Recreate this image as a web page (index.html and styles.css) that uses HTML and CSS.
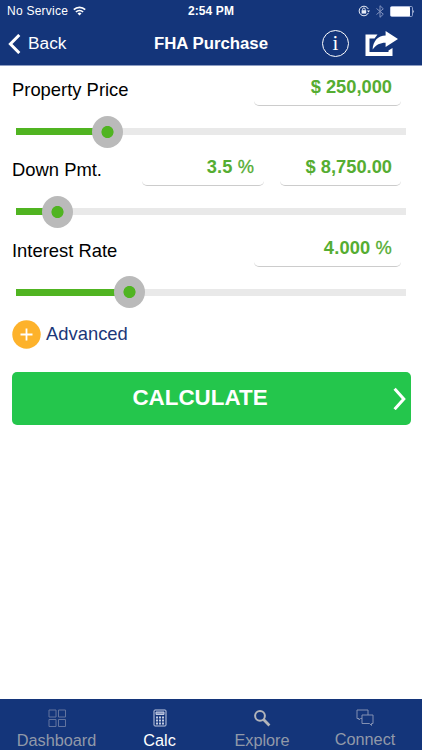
FILE: index.html
```html
<!DOCTYPE html>
<html lang="en">
<head>
  <meta charset="UTF-8">
  <meta name="viewport" content="width=device-width, initial-scale=1.0">
  <title>FHA Purchase</title>
  <link rel="stylesheet" href="styles.css">
</head>
<body>
  <header>
    <div class="status">
      <div class="carrier">
        <span>No Service</span>
        <svg width="13" height="10" viewBox="0 0 13 10" fill="none" stroke="#fff" stroke-width="1.7">
          <path d="M0.8 3.6a8.2 8.2 0 0 1 11.4 0M2.9 6a5.2 5.2 0 0 1 7.2 0"/>
          <path d="M6.5 9.5L4.5 7.5a2.9 2.9 0 0 1 4 0z" fill="#fff" stroke="none"/>
        </svg>
      </div>
      <div class="time">2:54 PM</div>
      <div class="indicators">
        <svg width="12" height="12" viewBox="0 0 12 12" fill="none" stroke="#e6ebf5">
          <path d="M10.3 4A4.8 4.8 0 1 0 10.3 8"/>
          <path d="M9 5.6h3l-1.5 2z" fill="#e6ebf5" stroke="none"/>
          <rect x="3.6" y="5.2" width="4.6" height="3.4" fill="#e6ebf5" stroke="none"/>
          <path d="M4.6 5.4V4.3a1.3 1.3 0 0 1 2.6 0v1.1"/>
        </svg>
        <svg class="bluetooth" width="8" height="13" viewBox="0 0 8 13" fill="none" stroke="#8394bf">
          <path d="M0.5 3.5l6.8 5.7L4 12.3V0.7l3.3 3.1L0.5 9.5"/>
        </svg>
        <svg width="25" height="11" viewBox="0 0 25 11">
          <rect x="0.5" y="0.5" width="22" height="10" rx="1.2" fill="none" stroke="#8fa0cb"/>
          <rect x="0.5" y="0.8" width="19.5" height="9.4" rx="0.8" fill="#fff"/>
          <path d="M23.4 3.8q1.4 1.7 0 3.4z" fill="#fff"/>
        </svg>
      </div>
    </div>
    <nav class="navbar">
      <a class="back">
        <svg width="13" height="20" viewBox="0 0 13 20" fill="none" stroke="#fff" stroke-width="3">
          <path d="M11.3 1L2.4 10l8.9 9"/>
        </svg>
        <span>Back</span>
      </a>
      <h1>FHA Purchase</h1>
      <div class="actions">
        <span class="info">i</span>
        <svg width="33" height="25" viewBox="0 0 33 25">
          <path d="M12.5 3.5H0.5V25h27v-8l-4 2.5v1.6H4.5V7.5h5z" fill="#fff"/>
          <path d="M7.6 18.6C8 10 13 4.6 20.6 4.5V0L33 8l-12.4 8v-4.3C15.5 11.6 11 13.6 7.6 18.6z" fill="#fff"/>
        </svg>
      </div>
    </nav>
  </header>

  <main>
    <section class="row">
      <div class="line">
        <label>Property Price</label>
        <div class="field wide">$ 250,000</div>
      </div>
      <div class="slider">
        <div class="fill" style="width: 91.5px"></div>
        <div class="knob"></div>
      </div>
    </section>
    <section class="row">
      <div class="line">
        <label>Down Pmt.</label>
        <div class="field percent">3.5 <span>%</span></div>
        <div class="field">$ 8,750.00</div>
      </div>
      <div class="slider">
        <div class="fill" style="width: 41px"></div>
        <div class="knob"></div>
      </div>
    </section>
    <section class="row">
      <div class="line">
        <label>Interest Rate</label>
        <div class="field wide rate">4.000 <span>%</span></div>
      </div>
      <div class="slider">
        <div class="fill" style="width: 113.5px"></div>
        <div class="knob"></div>
      </div>
    </section>

    <a class="advanced">
      <svg width="29" height="29" viewBox="0 0 29 29">
        <circle cx="14.5" cy="14.5" r="14.2" fill="#fdb22b"/>
        <path d="M8.5 14.5h12M14.5 8.5v12" stroke="#fff" stroke-width="1.8"/>
      </svg>
      <span>Advanced</span>
    </a>

    <button class="calculate">
      <span>CALCULATE</span>
      <svg width="14" height="23" viewBox="0 0 14 23" fill="none" stroke="#fff" stroke-width="3">
        <path d="M1.6 1.8l9.2 10.2-9.2 10.2"/>
      </svg>
    </button>
  </main>

  <footer>
    <a class="tab">
      <svg width="18" height="18" viewBox="0 0 18 18" fill="none" stroke="#62749f">
        <path d="M1 1h7v7H1zM10.5 1h7v7h-7zM1 10.5h7v7H1zM10.5 10.5h7v7h-7z"/>
      </svg>
      <span>Dashboard</span>
    </a>
    <a class="tab active">
      <svg width="14" height="18" viewBox="0 0 14 18" fill="none" stroke="#c3cce2">
        <rect x="1" y="1" width="12" height="16" rx="1"/>
        <path d="M3 3h8v2.5H3z" fill="#8797c0"/>
        <path d="M3 8.5h2M6 8.5h2M9 8.5h2M3 11.5h2M6 11.5h2M9 11.5h2M3 14.5h2M6 14.5h2M9 14.5h2" stroke-width="1.8"/>
      </svg>
      <span>Calc</span>
    </a>
    <a class="tab">
      <svg width="18" height="18" viewBox="0 0 18 18" fill="none" stroke="#b3b5ba">
        <circle cx="7" cy="6.8" r="4.9" stroke-width="2"/>
        <path d="M10.6 10.6l5.8 5.8" stroke-width="2.8"/>
      </svg>
      <span>Explore</span>
    </a>
    <a class="tab">
      <svg width="18" height="18" viewBox="0 0 18 18" fill="none" stroke="#8290b2">
        <path d="M6 9.5H4.5L3 11V9.5H1V1h11v5"/>
        <path d="M6 6h11v8.5h-1.5v2l-2-2H6z"/>
      </svg>
      <span>Connect</span>
    </a>
  </footer>
</body>
</html>
```
FILE: styles.css
```css
* {
  box-sizing: border-box;
}
body {
  margin: 0;
  height: 750px;
  display: flex;
  flex-direction: column;
  font-family: "Liberation Sans", Arial, sans-serif;
  background-color: #fff;
  overflow: hidden;
}
svg {
  display: block;
  flex: none;
}
header {
  height: 66px;
  background-color: #14357a;
  border-bottom: 1px solid #8d9dc2;
  color: #fff;
}
.status {
  display: grid;
  grid-template-columns: 1fr auto 1fr;
  align-items: center;
  height: 22px;
  padding: 0 7px;
  font-size: 12px;
}
.carrier, .indicators {
  display: flex;
  align-items: center;
}
.carrier {
  gap: 5px;
  letter-spacing: 0.25px;
}
.time {
  font-weight: bold;
  letter-spacing: 0.1px;
}
.indicators {
  justify-content: flex-end;
}
.indicators svg:first-child {
  margin-left: 4px;
}
.bluetooth {
  margin: 0 6px 0 6px;
}
.navbar {
  display: grid;
  grid-template-columns: 1fr auto 1fr;
  align-items: center;
  height: 43px;
  padding: 0 24px 0 8px;
}
.back {
  display: flex;
  align-items: center;
  gap: 7px;
  font-size: 17.3px;
}
h1 {
  margin: 0 0 0 16px;
  font-size: 16.8px;
}
.actions {
  display: flex;
  align-items: center;
  justify-content: flex-end;
  gap: 16px;
}
.info {
  width: 27px;
  height: 27px;
  border: 1.3px solid #fff;
  border-radius: 50%;
  font: 21px/24px "Liberation Serif", serif;
  text-align: center;
}
main {
  flex: 1;
  padding: 0 12px;
}
.row {
  height: 80.4px;
}
.line {
  display: flex;
  height: 40px;
  padding-right: 9px;
}
label {
  flex: 1;
  padding-top: 13px;
  font-size: 18.4px;
  line-height: 22px;
}
.field {
  width: 121px;
  height: 40px;
  padding: 10px 9px 0 0;
  border-bottom: 1px solid #ccc;
  border-radius: 5px;
  color: #55ad32;
  font-size: 18.3px;
  font-weight: bold;
  line-height: 22px;
  text-align: right;
}
.field span {
  font-weight: normal;
  -webkit-text-stroke: 0.3px #55ad32;
}
.wide {
  width: 147px;
}
.percent {
  width: 122px;
  margin-right: 16px;
  padding-right: 10px;
  letter-spacing: 0.1px;
}
.rate {
  letter-spacing: 0.15px;
}
.slider {
  display: flex;
  align-items: center;
  height: 7px;
  margin: 22px 4px 0;
  background-color: #e9e9e9;
}
.fill {
  height: 7px;
  background-color: #50b421;
}
.knob {
  flex: none;
  width: 31px;
  height: 32px;
  margin-left: -15.5px;
  border-radius: 50%;
  background: radial-gradient(circle, #50b421 5.7px, #bababa 6.4px);
}
.advanced {
  display: flex;
  align-items: center;
  gap: 5px;
  height: 29px;
  margin-top: 12.5px;
  color: #1b3779;
  font-size: 18.4px;
}
.calculate {
  display: flex;
  align-items: center;
  width: 399px;
  height: 53px;
  margin-top: 23px;
  padding: 0 4px 0 0;
  border: none;
  border-radius: 5px;
  background-color: #24c64c;
  color: #fff;
  font-family: inherit;
  font-size: 22.4px;
  font-weight: bold;
}
.calculate span {
  flex: 1;
  padding-right: 5px;
}
footer {
  display: grid;
  grid-template-columns: 113px 93px 112px 94px;
  height: 51px;
  background-color: #14357a;
}
.tab {
  display: flex;
  flex-direction: column;
  align-items: center;
  gap: 4px;
  padding-top: 10px;
  color: #9199a9;
  font-size: 16.3px;
}
.tab:last-child {
  gap: 3px;
}
.active {
  color: #fff;
}
```
